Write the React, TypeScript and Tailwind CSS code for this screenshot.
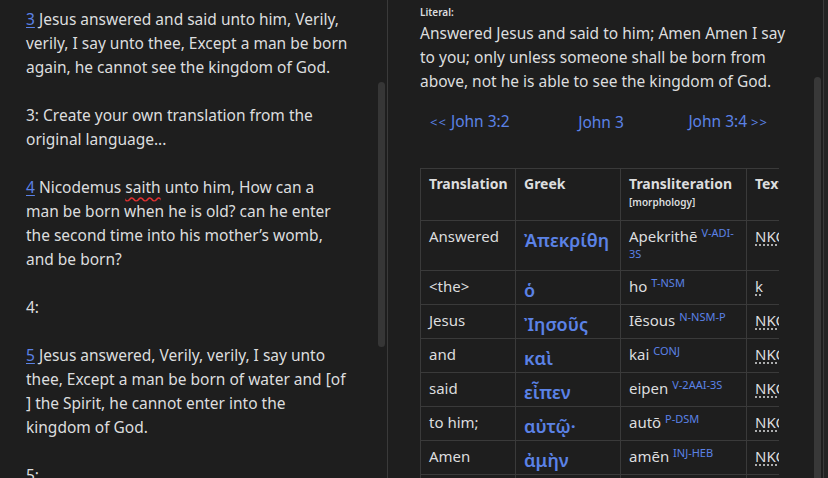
import React from "react"

const font = { fontFamily: '"Segoe UI", "Noto Sans", "DejaVu Sans", sans-serif' }

type Row = {
  en: string
  gr: string
  tr: string
  morph: string[]
  txt: string
  tall?: boolean
}

const rows: Row[] = [
  { en: "Answered", gr: "Ἀπεκρίθη", tr: "Apekrithē", morph: ["V-ADI-", "3S"], txt: "NKO", tall: true },
  { en: "<the>", gr: "ὁ", tr: "ho", morph: ["T-NSM"], txt: "k" },
  { en: "Jesus", gr: "Ἰησοῦς", tr: "Iēsous", morph: ["N-NSM-P"], txt: "NKO" },
  { en: "and", gr: "καὶ", tr: "kai", morph: ["CONJ"], txt: "NKO" },
  { en: "said", gr: "εἶπεν", tr: "eipen", morph: ["V-2AAI-3S"], txt: "NKO" },
  { en: "to him;", gr: "αὐτῷ·", tr: "autō", morph: ["P-DSM"], txt: "NKO" },
  { en: "Amen", gr: "ἀμὴν", tr: "amēn", morph: ["INJ-HEB"], txt: "NKO" },
  { en: "Amen", gr: "ἀμὴν", tr: "amēn", morph: ["INJ-HEB"], txt: "NKO" },
]

function Lines({ lines }: { lines: React.ReactNode[] }) {
  return (
    <p className="mb-6">
      {lines.map((l, i) => (
        <span key={i} className="block whitespace-nowrap">
          {l}
        </span>
      ))}
    </p>
  )
}

function VerseNum({ n }: { n: string }) {
  return <a className="text-[#5b82e6] underline underline-offset-2">{n}</a>
}

export default function App() {
  return (
    <div className="flex h-[478px] w-[828px] overflow-hidden bg-[#1e1e1e] text-[#dcddde]" style={font}>
      {/* left: KJV text */}
      <div className="relative w-[387px] shrink-0 overflow-hidden">
        <div className="mt-[7px] pl-[26px] text-[15.5px] leading-6">
          <Lines
            lines={[
              <>
                <VerseNum n="3" /> Jesus answered and said unto him, Verily,
              </>,
              "verily, I say unto thee, Except a man be born",
              "again, he cannot see the kingdom of God.",
            ]}
          />
          <Lines lines={["3: Create your own translation from the", "original language..."]} />
          <Lines
            lines={[
              <>
                <VerseNum n="4" /> Nicodemus{" "}
                <span className="underline decoration-wavy decoration-[#e03030] underline-offset-[3px]">saith</span> unto
                him, How can a
              </>,
              "man be born when he is old? can he enter",
              "the second time into his mother’s womb,",
              "and be born?",
            ]}
          />
          <Lines lines={["4:"]} />
          <Lines
            lines={[
              <>
                <VerseNum n="5" /> Jesus answered, Verily, verily, I say unto
              </>,
              "thee, Except a man be born of water and [of",
              "] the Spirit, he cannot enter into the",
              "kingdom of God.",
            ]}
          />
          <Lines lines={["5:"]} />
        </div>
        <div className="absolute right-[2px] top-[82px] h-[265px] w-[7px] rounded-full bg-[#363636]" />
      </div>

      <div className="w-px shrink-0 bg-[#3a3a3a]" />

      {/* right: interlinear */}
      <div className="relative flex-1 overflow-hidden">
        <div className="w-[360px] pl-[32px] pt-[5px]" style={{ boxSizing: "content-box" }}>
          <div className="text-[10px] font-semibold leading-[14px]">Literal:</div>
          <div className="mt-[2px] text-[15.5px] leading-6">
            <span className="block whitespace-nowrap">Answered Jesus and said to him; Amen Amen I say</span>
            <span className="block whitespace-nowrap">to you; only unless someone shall be born from</span>
            <span className="block whitespace-nowrap">above, not he is able to see the kingdom of God.</span>
          </div>

          <div className="mt-[16px] flex items-center justify-between pl-[10px] pr-[12px] text-[15.5px] leading-6 text-[#5b82e6]">
            <span>
              <span className="text-[13px] tracking-[1px]">&lt;&lt;</span> John 3:2
            </span>
            <span className="-mr-[4px]">John 3</span>
            <span>
              John 3:4 <span className="text-[13px] tracking-[1px]">&gt;&gt;</span>
            </span>
          </div>

          <div className="mt-[34px] w-[359px] overflow-hidden">
            <table className="w-[420px] table-fixed border-collapse text-[15px]">
              <colgroup>
                <col className="w-[95px]" />
                <col className="w-[105px]" />
                <col className="w-[126px]" />
                <col className="w-[94px]" />
              </colgroup>
              <thead>
                <tr className="h-[52px] align-top">
                  <th className="border border-[#3a3a3a] px-2 pt-[5px] text-left text-[14px] font-bold leading-5">Translation</th>
                  <th className="border border-[#3a3a3a] px-2 pt-[5px] text-left text-[14px] font-bold leading-5">Greek</th>
                  <th className="border border-[#3a3a3a] px-2 pt-[5px] text-left text-[14px] font-bold leading-5">
                    Transliteration
                    <div className="text-[10px] font-semibold leading-4">[morphology]</div>
                  </th>
                  <th className="border border-[#3a3a3a] px-2 pt-[5px] text-left text-[14px] font-bold leading-5">Text</th>
                </tr>
              </thead>
              <tbody>
                {rows.map((r, i) => (
                  <tr key={i} className={`${r.tall ? "h-[50px]" : "h-[34px]"} align-top`}>
                    <td className="border border-[#3a3a3a] px-2 pt-[5px] leading-5">{r.en}</td>
                    <td className="border border-[#3a3a3a] px-2 pt-[7px] text-[18px] font-semibold leading-6 text-[#5b82e6]">
                      {r.gr}
                    </td>
                    <td className="border border-[#3a3a3a] px-2 pt-[5px] leading-5">
                      {r.tr}{" "}
                      <sup className="text-[11px] text-[#5b82e6]">{r.morph[0]}</sup>
                      {r.morph[1] && <div className="text-[11px] leading-4 text-[#5b82e6]">{r.morph[1]}</div>}
                    </td>
                    <td className="whitespace-nowrap border border-[#3a3a3a] px-2 pt-[5px] leading-5">
                      <span className="underline decoration-dotted underline-offset-[3px]">{r.txt}</span>
                    </td>
                  </tr>
                ))}
              </tbody>
            </table>
          </div>
        </div>
        <div className="absolute right-[7px] top-[77px] h-[420px] w-[7px] rounded-full bg-[#383838]" />
        <div className="absolute right-[4px] top-0 h-full w-px bg-[#3a3a3a]" />
        <div className="absolute right-0 top-0 h-full w-[4px] bg-[#232323]" />
      </div>
    </div>
  )
}
